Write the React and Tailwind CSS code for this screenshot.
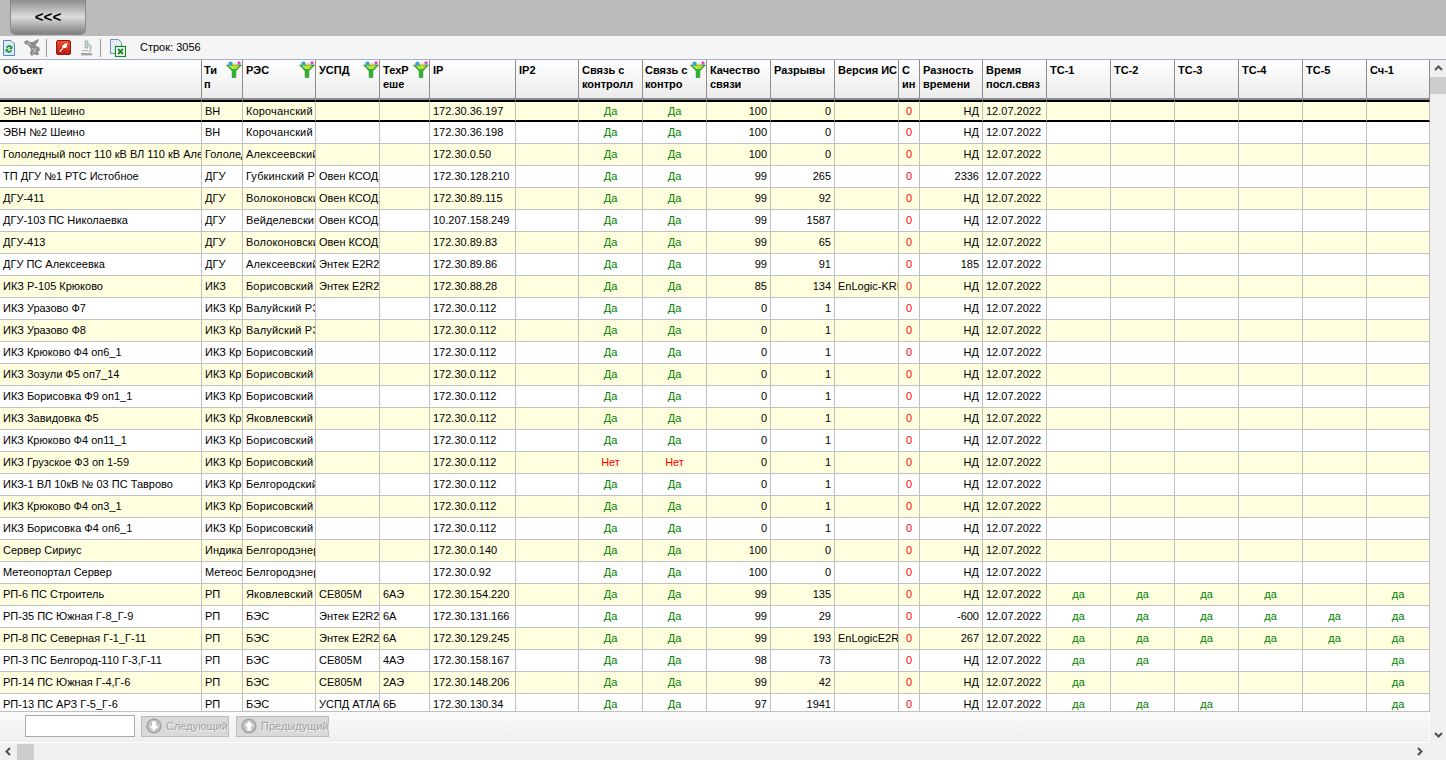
import React from "react";

const COLS = [
  "w-[202px]", "w-[41px]", "w-[73px]", "w-[64px]", "w-[50px]", "w-[86px]", "w-[63px]",
  "w-[64px]", "w-[64px]", "w-[64px]", "w-[64px]", "w-[64px]", "w-[21px]", "w-[63px]",
  "w-[64px]", "w-[64px]", "w-[64px]", "w-[64px]", "w-[64px]", "w-[64px]", "w-[63px]",
];

const HEADERS = [
  { lines: ["Объект"] },
  { lines: ["Ти", "п"], filter: true, tight: true },
  { lines: ["РЭС"], filter: true },
  { lines: ["УСПД"], filter: true },
  { lines: ["ТехР", "еше"], filter: true },
  { lines: ["IP"] },
  { lines: ["IP2"] },
  { lines: ["Связь с", "контролл"] },
  { lines: ["Связь с", "контро"], filter: true, tight: true },
  { lines: ["Качество", "связи"] },
  { lines: ["Разрывы"] },
  { lines: ["Версия ИС"] },
  { lines: ["С", "ин"] },
  { lines: ["Разность", "времени"] },
  { lines: ["Время", "посл.связ"] },
  { lines: ["ТС-1"] },
  { lines: ["ТС-2"] },
  { lines: ["ТС-3"] },
  { lines: ["ТС-4"] },
  { lines: ["ТС-5"] },
  { lines: ["Сч-1"] },
];

// obj, type, res, uspd, tech, ip, quality, breaks, version, diff, link ok, flags TC1-5 + Сч-1
const ROWS = [
  ["ЭВН №1 Шеино", "ВН", "Корочанский", "", "", "172.30.36.197", 100, 0, "", "НД"],
  ["ЭВН №2 Шеино", "ВН", "Корочанский", "", "", "172.30.36.198", 100, 0, "", "НД"],
  ["Гололедный пост 110 кВ ВЛ 110 кВ Алексеевка", "Гололедный", "Алексеевский", "", "", "172.30.0.50", 100, 0, "", "НД"],
  ["ТП ДГУ №1 РТС Истобное", "ДГУ", "Губкинский РЭС", "Овен КСОД", "", "172.30.128.210", 99, 265, "", "2336"],
  ["ДГУ-411", "ДГУ", "Волоконовский", "Овен КСОД", "", "172.30.89.115", 99, 92, "", "НД"],
  ["ДГУ-103 ПС Николаевка", "ДГУ", "Вейделевский", "Овен КСОД", "", "10.207.158.249", 99, 1587, "", "НД"],
  ["ДГУ-413", "ДГУ", "Волоконовский", "Овен КСОД", "", "172.30.89.83", 99, 65, "", "НД"],
  ["ДГУ ПС Алексеевка", "ДГУ", "Алексеевский", "Энтек E2R2", "", "172.30.89.86", 99, 91, "", "185"],
  ["ИКЗ Р-105 Крюково", "ИКЗ", "Борисовский", "Энтек E2R2", "", "172.30.88.28", 85, 134, "EnLogic-KRI", "НД"],
  ["ИКЗ Уразово Ф7", "ИКЗ Крюково", "Валуйский РЭС", "", "", "172.30.0.112", 0, 1, "", "НД"],
  ["ИКЗ Уразово Ф8", "ИКЗ Крюково", "Валуйский РЭС", "", "", "172.30.0.112", 0, 1, "", "НД"],
  ["ИКЗ Крюково Ф4 оп6_1", "ИКЗ Крюково", "Борисовский", "", "", "172.30.0.112", 0, 1, "", "НД"],
  ["ИКЗ Зозули Ф5 оп7_14", "ИКЗ Крюково", "Борисовский", "", "", "172.30.0.112", 0, 1, "", "НД"],
  ["ИКЗ Борисовка Ф9 оп1_1", "ИКЗ Крюково", "Борисовский", "", "", "172.30.0.112", 0, 1, "", "НД"],
  ["ИКЗ Завидовка Ф5", "ИКЗ Крюково", "Яковлевский", "", "", "172.30.0.112", 0, 1, "", "НД"],
  ["ИКЗ Крюково Ф4 оп11_1", "ИКЗ Крюково", "Борисовский", "", "", "172.30.0.112", 0, 1, "", "НД"],
  ["ИКЗ Грузское Ф3 оп 1-59", "ИКЗ Крюково", "Борисовский", "", "", "172.30.0.112", 0, 1, "", "НД", false],
  ["ИКЗ-1 ВЛ 10кВ № 03 ПС Таврово", "ИКЗ Крюково", "Белгородский", "", "", "172.30.0.112", 0, 1, "", "НД"],
  ["ИКЗ Крюково Ф4 оп3_1", "ИКЗ Крюково", "Борисовский", "", "", "172.30.0.112", 0, 1, "", "НД"],
  ["ИКЗ Борисовка Ф4 оп6_1", "ИКЗ Крюково", "Борисовский", "", "", "172.30.0.112", 0, 1, "", "НД"],
  ["Сервер Сириус", "Индикатор", "Белгородэнерго", "", "", "172.30.0.140", 100, 0, "", "НД"],
  ["Метеопортал Сервер", "Метеостанция", "Белгородэнерго", "", "", "172.30.0.92", 100, 0, "", "НД"],
  ["РП-6 ПС Строитель", "РП", "Яковлевский", "СЕ805М", "6АЭ", "172.30.154.220", 99, 135, "", "НД", true, [1, 1, 1, 1, 0, 1]],
  ["РП-35 ПС Южная Г-8_Г-9", "РП", "БЭС", "Энтек E2R2", "6А", "172.30.131.166", 99, 29, "", "-600", true, [1, 1, 1, 1, 1, 1]],
  ["РП-8 ПС Северная Г-1_Г-11", "РП", "БЭС", "Энтек E2R2", "6А", "172.30.129.245", 99, 193, "EnLogicE2R", "267", true, [1, 1, 1, 1, 1, 1]],
  ["РП-3 ПС Белгород-110 Г-3,Г-11", "РП", "БЭС", "СЕ805М", "4АЭ", "172.30.158.167", 98, 73, "", "НД", true, [1, 1, 0, 0, 0, 1]],
  ["РП-14 ПС Южная Г-4,Г-6", "РП", "БЭС", "СЕ805М", "2АЭ", "172.30.148.206", 99, 42, "", "НД", true, [1, 0, 0, 0, 0, 1]],
  ["РП-13 ПС АРЗ Г-5_Г-6", "РП", "БЭС", "УСПД АТЛАС", "6Б", "172.30.130.34", 97, 1941, "", "НД", true, [1, 1, 1, 0, 0, 1]],
];

function Funnel() {
  return (
    <svg width="16" height="17" viewBox="0 0 16 17" className="absolute top-[1px] right-0">
      <path d="M0.5 4 H15.5 L9.8 10 V16.5 L6.2 16.5 V10 Z" fill="#2fb52f" stroke="#1a7d1a" strokeWidth="0.6" />
      <path d="M2.5 4.6 H13.5 L10 8 H6 Z" fill="#b6e23a" />
      <circle cx="4.5" cy="2.6" r="2.2" fill="#3f9fe8" />
      <circle cx="13" cy="2" r="1.7" fill="#e43fd0" />
      <circle cx="9" cy="3.6" r="1.3" fill="#f0cf3a" />
    </svg>
  );
}

function RefreshDoc() {
  return (
    <svg width="14" height="16" viewBox="0 0 14 16">
      <path d="M1.5 .5 H9 L12.5 4 V15.5 H1.5 Z" fill="#dfeafa" stroke="#5f86b8" />
      <path d="M4 8 A3 3 0 0 1 9.5 6.5 L10.5 5.5 V9 H7 L8.3 7.7 A1.6 1.6 0 0 0 5.4 8.4 Z" fill="#1f9e3a" />
      <path d="M10 10 A3 3 0 0 1 4.5 11.5 L3.5 12.5 V9 H7 L5.7 10.3 A1.6 1.6 0 0 0 8.6 9.6 Z" fill="#1f9e3a" />
    </svg>
  );
}

function ToolsIcon() {
  return (
    <svg width="17" height="17" viewBox="0 0 17 17">
      <path d="M0 3 L3 1 L6 3 L9 3 L12 1 L15 0 L14 3 L12 5 L12 7 L15 8 L16 11 L14 13 L15 16 L12 16 L10 15 L8 17 L6 15 L7 10 L4 6 L1 5 Z" fill="#8c8c8c" />
      <path d="M8 9 L12 13 M12 9 L9 14 M3 3 L7 6" stroke="#cfcfcf" strokeWidth="1" />
    </svg>
  );
}

function RedIcon() {
  return (
    <svg width="15" height="15" viewBox="0 0 15 15">
      <defs>
        <linearGradient id="redbox" x1="0" y1="0" x2="0" y2="1">
          <stop offset="0" stopColor="#f05030" />
          <stop offset="1" stopColor="#b81c10" />
        </linearGradient>
      </defs>
      <rect x=".5" y=".5" width="14" height="14" rx="1.5" fill="url(#redbox)" stroke="#8e1a0e" />
      <path d="M3 11.5 L6.5 8 L6 6 L9 3.5 L12 3.5 L10.5 5.5 L11.5 6.5 L9.5 8 L7.5 8 L4.5 12 Z" fill="#ffffff" />
    </svg>
  );
}

function MicroscopeIcon() {
  return (
    <svg width="13" height="16" viewBox="0 0 13 16">
      <path d="M5 1 H8 V8 H5 Z" fill="#bcd6c6" stroke="#8fa898" strokeWidth=".7" />
      <path d="M9 4 A5 5 0 0 1 9 12" fill="none" stroke="#a8b8ae" strokeWidth="1.4" />
      <rect x="1" y="13" width="11" height="2.4" fill="#a0a8a0" />
      <rect x="2" y="10" width="6" height="1.2" fill="#b4bcb4" />
    </svg>
  );
}

function ExcelDoc() {
  return (
    <svg width="17" height="18" viewBox="0 0 17 18">
      <path d="M1.5 .5 H9.5 L12.5 3.5 V14.5 H1.5 Z" fill="#e4edf8" stroke="#6f93bd" />
      <rect x="6.5" y="7.5" width="10" height="10" fill="#ffffff" stroke="#0f8a1f" strokeWidth="1.2" />
      <path d="M9 10 L14 15 M14 10 L9 15" stroke="#0f8a1f" strokeWidth="1.8" />
    </svg>
  );
}

function CircleArrow({ up }) {
  return (
    <svg width="16" height="16" viewBox="0 0 16 16" className="shrink-0">
      <circle cx="8" cy="8" r="7.6" fill="#9f9f9f" />
      <circle cx="8" cy="8" r="6.2" fill="#c4c4c4" />
      <path d={up ? "M8 3 L12.5 8 H10 V12.5 H6 V8 H3.5 Z" : "M8 13 L12.5 8 H10 V3.5 H6 V8 H3.5 Z"} fill="#ffffff" />
    </svg>
  );
}

function PagerButton({ label, up, width }) {
  return (
    <button className={`${width} h-[21px] flex items-center gap-[4px] pl-[4px] bg-[#d9d9d9] border border-[#bcbcbc] text-[11px] text-[#a2a2a2] [text-shadow:1px_1px_0_#f4f4f4]`}>
      <CircleArrow up={up} />
      {label}
    </button>
  );
}

function Chevron({ d, className }) {
  return (
    <svg width="9" height="9" viewBox="0 0 9 9" className={className}>
      <path d={d} fill="none" stroke="#505050" strokeWidth="2" />
    </svg>
  );
}

const tdBase = "h-[22px] p-0 px-[3px] overflow-hidden whitespace-nowrap border-r border-b border-[#c0c0c0]";

function Row({ row, index }) {
  const [obj, type, res, uspd, tech, ip, quality, breaks, version, diff, ok = true, flags = []] = row;
  const selected = index === 0;
  const bg = index % 2 === 0 ? "bg-[#ffffe0]" : "bg-white";
  const edge = selected ? "border-t-2 border-b-2 border-t-black border-b-black" : "";
  const td = `${tdBase} ${bg} ${edge}`;
  const link = ok ? "Да" : "Нет";
  const linkColor = ok ? "text-[#008000]" : "text-[#ff0000]";
  return (
    <tr>
      <td className={td}>{obj}</td>
      <td className={td}>{type}</td>
      <td className={`${td} tracking-[0.15px]`}>{res}</td>
      <td className={td}>{uspd}</td>
      <td className={td}>{tech}</td>
      <td className={td}>{ip}</td>
      <td className={td}></td>
      <td className={`${td} text-center ${linkColor}`}>{link}</td>
      <td className={`${td} text-center ${linkColor}`}>{link}</td>
      <td className={`${td} text-right`}>{quality}</td>
      <td className={`${td} text-right`}>{breaks}</td>
      <td className={td}>{version}</td>
      <td className={`${td} text-center text-[#ff0000]`}>0</td>
      <td className={`${td} text-right`}>{diff}</td>
      <td className={td}>12.07.2022</td>
      {[0, 1, 2, 3, 4, 5].map(i => (
        <td key={i} className={`${td} text-center text-[#008000]`}>{flags[i] ? "да" : ""}</td>
      ))}
    </tr>
  );
}

export default function App() {
  return (
    <div className="w-[1446px] h-[760px] overflow-hidden flex flex-col bg-[#f0f0f0] text-black text-[11px] font-['Liberation_Sans',Arial,sans-serif]">
      {/* top bar */}
      <div className="h-[36px] shrink-0 bg-[#bababa] pl-[10px]">
        <button className="w-[76px] h-[35px] rounded-b-[6px] border border-t-0 border-[#8a8a8a] bg-gradient-to-b from-[#8f8f8f] via-[#dcdcdc] to-[#808080] text-[15px] font-bold">
          &lt;&lt;&lt;
        </button>
      </div>

      {/* toolbar */}
      <div className="h-[24px] shrink-0 flex items-center bg-[#f5f5f5] border-b border-[#a3b3c4] text-[11px]">
        <div className="ml-[2px] w-[21px]"><RefreshDoc /></div>
        <div className="ml-[1px] w-[22px]"><ToolsIcon /></div>
        <div className="w-px h-[18px] bg-[#9a9a9a]"></div>
        <div className="ml-[9px] w-[24px]"><RedIcon /></div>
        <div className="w-[20px]"><MicroscopeIcon /></div>
        <div className="w-px h-[18px] bg-[#9a9a9a]"></div>
        <div className="ml-[8px] w-[31px]"><ExcelDoc /></div>
        <span>Строк: 3056</span>
      </div>

      <div className="flex-1 min-h-0 flex">
        <div className="w-[1430px] flex flex-col">
          {/* grid */}
          <div className="h-[652px] shrink-0 overflow-hidden border-b border-[#c0c0c0] bg-white">
            <table className="w-[1430px] table-fixed border-separate border-spacing-0">
              <colgroup>
                {COLS.map((c, i) => <col key={i} className={c} />)}
              </colgroup>
              <thead>
                <tr>
                  {HEADERS.map((h, i) => (
                    <th
                      key={i}
                      className={`relative h-[40px] p-0 ${h.tight ? "pl-[2px]" : "pl-[3px]"} pt-[3px] align-top text-left font-bold leading-[14px] whitespace-nowrap overflow-hidden bg-gradient-to-b from-white to-[#ebebeb] border-r border-b-2 border-r-[#8c8c8c] border-b-[#8c8c8c]`}
                    >
                      {h.lines.map(l => <div key={l}>{l}</div>)}
                      {h.filter && <Funnel />}
                    </th>
                  ))}
                </tr>
              </thead>
              <tbody>
                {ROWS.map((r, i) => <Row key={i} row={r} index={i} />)}
              </tbody>
            </table>
          </div>

          {/* search pager */}
          <div className="flex-1 flex items-center gap-[6px] pl-[25px] pb-[2px] bg-gradient-to-b from-[#fafafa] to-[#efefef] border-b border-r border-white">
            <input className="w-[110px] h-[22px] bg-white border border-[#ababab]" />
            <PagerButton label="Следующий" width="w-[88px]" />
            <div className="ml-[1px]">
              <PagerButton label="Предыдущий" up width="w-[93px]" />
            </div>
          </div>
        </div>

        {/* vertical scrollbar */}
        <div className="w-[16px] flex flex-col items-center">
          <div className="h-[17px] flex items-center justify-center"><Chevron d="M1 6 L4.5 2.5 L8 6" /></div>
          <div className="w-full h-[17px] bg-[#cdcdcd]"></div>
          <div className="flex-1"></div>
          <div className="h-[17px] flex items-center justify-center"><Chevron d="M1 3 L4.5 6.5 L8 3" /></div>
        </div>
      </div>

      {/* horizontal scrollbar */}
      <div className="h-[17px] shrink-0 flex items-center">
        <div className="w-[17px] flex justify-center"><Chevron d="M6 1 L2.5 4.5 L6 8" /></div>
        <div className="w-[17px] h-[16px] bg-[#cdcdcd]"></div>
        <div className="flex-1"></div>
        <div className="w-[32px] pl-[1px] flex justify-start"><Chevron d="M3 1 L6.5 4.5 L3 8" /></div>
      </div>
    </div>
  );
}
